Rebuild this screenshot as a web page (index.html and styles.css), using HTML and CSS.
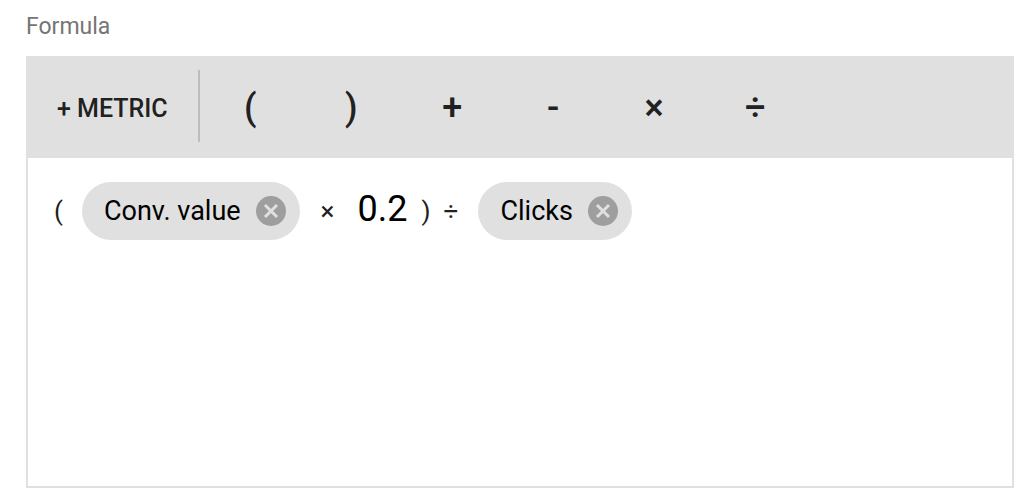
FILE: index.html
```html
<!DOCTYPE html>
<html lang="en">
<head>
    <meta charset="UTF-8">
    <meta name="viewport" content="width=device-width, initial-scale=1.0">
    <title>Formula</title>
    <link rel="stylesheet" href="styles.css">
</head>
<body>
    <main>
        <h1 id="formulaLabel">Formula</h1>

        <div class="editor">
            <!-- Toolbar -->
            <div class="toolbar">
                <button type="button" class="metric">+ METRIC</button>
                <div class="operators">
                    <button type="button">(</button>
                    <button type="button">)</button>
                    <button type="button">+</button>
                    <button type="button">-</button>
                    <button type="button">×</button>
                    <button type="button">÷</button>
                </div>
            </div>

            <!-- Formula -->
            <div class="formula" role="group" aria-labelledby="formulaLabel">
                <span class="op open">(</span>
                <div class="chip">
                    <span>Conv. value</span>
                    <button type="button" aria-label="Remove Conv. value">
                        <svg viewBox="0 0 30 30"><circle cx="15" cy="15" r="15"/><path d="M9 9l12 12M21 9L9 21"/></svg>
                    </button>
                </div>
                <span class="op times">×</span>
                <input type="text" class="number" value="0.2" aria-label="Number">
                <span class="op close">)</span>
                <span class="op divide">÷</span>
                <div class="chip">
                    <span>Clicks</span>
                    <button type="button" aria-label="Remove Clicks">
                        <svg viewBox="0 0 30 30"><circle cx="15" cy="15" r="15"/><path d="M9 9l12 12M21 9L9 21"/></svg>
                    </button>
                </div>
            </div>
        </div>
    </main>
</body>
</html>
```
FILE: styles.css
```css
* {
    margin: 0;
    padding: 0;
    box-sizing: border-box;
}

body {
    font-family: Roboto, "Liberation Sans", sans-serif;
    background: #fff;
    color: #212121;
}

button {
    font-family: inherit;
    color: inherit;
    background: none;
    border: none;
    cursor: pointer;
}

main {
    display: flex;
    flex-direction: column;
    gap: 13px;
    min-height: 100vh;
    padding: 11px 8px 8px 26px;
}

h1 {
    font-size: 23px;
    line-height: 32px;
    font-weight: 400;
    color: #757575;
}

.editor {
    flex: 1;
    border: 2px solid #e0e0e0;
}

.toolbar {
    display: flex;
    align-items: flex-start;
    padding: 12px 0 16px;
    background: #e0e0e0;
}

.metric {
    height: 72px;
    padding: 4px 30px 0 29px;
    border-right: 2px solid #bdbdbd;
    font-size: 25px;
    font-weight: 500;
}

.operators {
    display: flex;
}

.operators button {
    width: 101px;
    height: 72px;
    padding-top: 4px;
    font-size: 36px;
    font-weight: 500;
}

.formula {
    display: flex;
    flex-wrap: wrap;
    align-items: center;
    padding: 24px 26px;
}

.op {
    font-size: 26px;
    line-height: 58px;
}

.open {
    margin-right: 19px;
}

.chip {
    display: flex;
    align-items: center;
    gap: 15px;
    height: 58px;
    padding: 0 14px 0 22px;
    border-radius: 29px;
    background: #e0e0e0;
    color: #000;
    font-size: 27px;
}

.chip button {
    width: 30px;
    height: 30px;
}

.chip svg {
    display: block;
    fill: #9e9e9e;
    stroke: #e0e0e0;
    stroke-width: 3;
}

.chip circle {
    stroke: none;
}

.times {
    margin: 0 23px 0 21px;
}

.number {
    width: 64px;
    height: 58px;
    padding-bottom: 5px;
    border: none;
    outline: none;
    background: none;
    color: #000;
    font-family: inherit;
    font-size: 36px;
}

.divide {
    margin: 0 20px 0 13px;
}
```
